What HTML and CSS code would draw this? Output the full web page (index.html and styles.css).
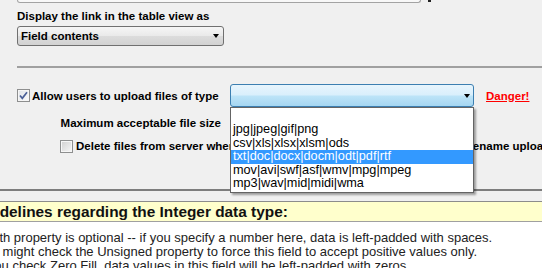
FILE: index.html
```html
<!DOCTYPE html>
<html lang="en">
<head>
    <meta charset="UTF-8">
    <title>Field properties</title>
    <link rel="stylesheet" href="styles.css">
</head>
<body>
    <div class="panel">
        <div class="top-row">
            <div class="top-box"></div>
            <span class="top-mark"></span>
        </div>
        <div class="label field-label">Display the link in the table view as</div>
        <div class="select">
            <span>Field contents</span>
            <span class="arrow"></span>
        </div>
        <div class="rule"></div>

        <div class="row upload">
            <span class="check">
                <svg width="11" height="11" viewBox="0 0 11 11"><path d="M2 5.5 L4.3 8.3 L9 2.3" fill="none" stroke="#4a5f97" stroke-width="1.7"/></svg>
            </span>
            <span class="label upload-label">Allow users to upload files of type</span>
            <div class="combo">
                <span class="arrow"></span>
                <ul class="list">
                    <li></li>
                    <li>jpg|jpeg|gif|png</li>
                    <li>csv|xls|xlsx|xlsm|ods</li>
                    <li class="selected">txt|doc|docx|docm|odt|pdf|rtf</li>
                    <li>mov|avi|swf|asf|wmv|mpg|mpeg</li>
                    <li>mp3|wav|mid|midi|wma</li>
                </ul>
            </div>
            <a class="danger" href="#">Danger!</a>
        </div>

        <div class="row size">
            <span class="label size-label">Maximum acceptable file size</span>
        </div>

        <div class="row delete">
            <span class="check empty"></span>
            <span class="label delete-label">Delete files from server when deleting a record or changing the stored filename upload</span>
        </div>
    </div>

    <div class="guide">
        <div class="guide-title">Guidelines regarding the Integer data type:</div>
        <div class="guide-body">
            <p>Width property is optional -- if you specify a number here, data is left-padded with spaces.</p>
            <p>You might check the Unsigned property to force this field to accept positive values only.</p>
            <p>If you check Zero Fill, data values in this field will be left-padded with zeros.</p>
        </div>
    </div>
</body>
</html>
```

FILE: styles.css
```css
body {
    margin: 0;
    width: 542px;
    height: 268px;
    overflow: hidden;
    background: #f0f0f0;
    font-family: "Liberation Sans", Arial, sans-serif;
    color: #000;
}
.panel {
    padding: 0 0 35px 17px;
    border-bottom: 2px solid #7d7d7d;
}
.top-row {
    display: flex;
    align-items: flex-start;
    height: 3px;
}
.top-box {
    width: 402px;
    height: 2px;
    border: 1px solid #a3a3a3;
    border-top: none;
    border-radius: 0 0 3px 3px;
    background: #f8f8f8;
}
.top-mark {
    width: 3px;
    height: 2px;
    margin-left: 7px;
    background: #222;
}
.label {
    font-weight: bold;
    font-size: 11.5px;
    line-height: 14px;
    white-space: nowrap;
}
.field-label {
    margin-top: 6px;
}
.select {
    box-sizing: border-box;
    margin-top: 3px;
    width: 207px;
    height: 20px;
    padding: 0 4px 0 3px;
    border: 1px solid #707070;
    border-radius: 3px;
    background: linear-gradient(#f6f6f6, #e9e9e9 50%, #dcdcdc 50%, #d2d2d2);
    display: flex;
    align-items: center;
    justify-content: space-between;
    font-weight: bold;
    font-size: 11.5px;
}
.arrow {
    width: 0;
    height: 0;
    border-left: 3.5px solid transparent;
    border-right: 3.5px solid transparent;
    border-top: 4px solid #000;
}
.rule {
    margin-top: 20px;
    height: 2px;
    background: #a0a0a0;
}
.row {
    display: flex;
    align-items: center;
    white-space: nowrap;
}
.upload {
    margin-top: 16px;
    height: 23px;
}
.check {
    box-sizing: border-box;
    width: 13px;
    height: 13px;
    flex: none;
    border: 1px solid #8e8f8f;
    background: linear-gradient(135deg, #dfe3e8, #fbfbfb);
    box-shadow: inset 0 0 0 1px #f6f6f6;
    display: flex;
}
.check svg {
    display: block;
}
.check.empty {
    background: linear-gradient(135deg, #cfcfcf, #f7f7f7);
}
.upload-label {
    width: 198px;
    margin-left: 2px;
}
.combo {
    position: relative;
    box-sizing: border-box;
    width: 244px;
    height: 23px;
    padding-right: 3px;
    border: 1px solid #3c7fb1;
    border-radius: 3px;
    background: linear-gradient(#e8f5fd, #d9effc 48%, #bde4f8 52%, #a5d6f1);
    display: flex;
    align-items: center;
    justify-content: flex-end;
}
.list {
    position: absolute;
    top: 22px;
    left: -1px;
    z-index: 2;
    box-sizing: border-box;
    width: 244px;
    margin: 0;
    padding: 1.5px 0 1px;
    list-style: none;
    border: 1px solid #646464;
    background: #fff;
    box-shadow: 2px 2px 2px rgba(0, 0, 0, 0.35);
}
.list li {
    height: 13.5px;
    line-height: 13.5px;
    padding-left: 2px;
    font-size: 12.7px;
}
.list li.selected {
    background: #3399ff;
    color: #fff;
}
.danger {
    margin-left: 12px;
    color: #ff0000;
    font-weight: bold;
    font-size: 11.5px;
}
.size {
    margin-top: 8px;
    height: 16px;
}
.size-label {
    width: 204px;
    text-align: right;
}
.delete {
    margin-top: 7px;
    height: 16px;
    padding-left: 43px;
}
.delete-label {
    margin-left: 3px;
}
.guide {
    margin-top: 10px;
    margin-left: -26px;
    white-space: nowrap;
}
.guide-title {
    border-top: 1px solid #8c8c8c;
    border-bottom: 1px solid #a0a0a0;
    background: #ffffcc;
    font-weight: bold;
    font-size: 15.4px;
    line-height: 19px;
    color: #111;
}
.guide-body {
    background: #fff;
    padding: 9px 0 0 3px;
    font-size: 13px;
    line-height: 14px;
    color: #222;
}
.guide-body p {
    margin: 0;
}
```
